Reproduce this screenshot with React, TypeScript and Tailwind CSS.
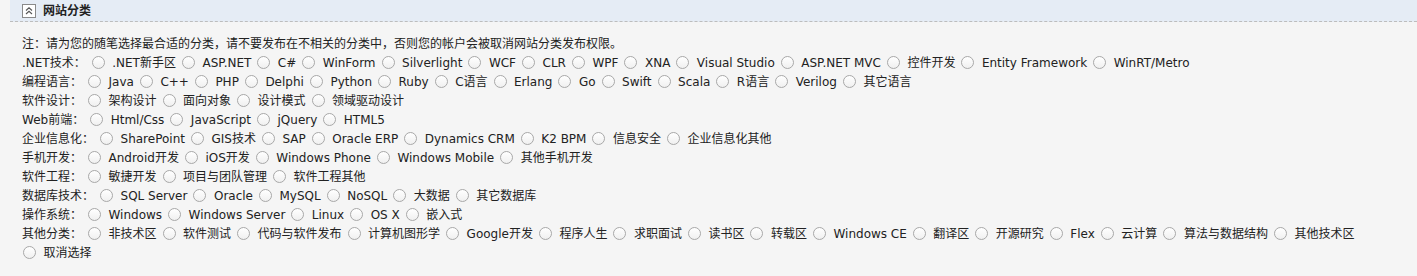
const groups: { label: string; items: string[] }[] = [
  {
    label: ".NET技术：",
    items: [".NET新手区", "ASP.NET", "C#", "WinForm", "Silverlight", "WCF", "CLR", "WPF", "XNA", "Visual Studio", "ASP.NET MVC", "控件开发", "Entity Framework", "WinRT/Metro"],
  },
  {
    label: "编程语言：",
    items: ["Java", "C++", "PHP", "Delphi", "Python", "Ruby", "C语言", "Erlang", "Go", "Swift", "Scala", "R语言", "Verilog", "其它语言"],
  },
  { label: "软件设计：", items: ["架构设计", "面向对象", "设计模式", "领域驱动设计"] },
  { label: "Web前端：", items: ["Html/Css", "JavaScript", "jQuery", "HTML5"] },
  {
    label: "企业信息化：",
    items: ["SharePoint", "GIS技术", "SAP", "Oracle ERP", "Dynamics CRM", "K2 BPM", "信息安全", "企业信息化其他"],
  },
  { label: "手机开发：", items: ["Android开发", "iOS开发", "Windows Phone", "Windows Mobile", "其他手机开发"] },
  { label: "软件工程：", items: ["敏捷开发", "项目与团队管理", "软件工程其他"] },
  { label: "数据库技术：", items: ["SQL Server", "Oracle", "MySQL", "NoSQL", "大数据", "其它数据库"] },
  { label: "操作系统：", items: ["Windows", "Windows Server", "Linux", "OS X", "嵌入式"] },
  {
    label: "其他分类：",
    items: ["非技术区", "软件测试", "代码与软件发布", "计算机图形学", "Google开发", "程序人生", "求职面试", "读书区", "转载区", "Windows CE", "翻译区", "开源研究", "Flex", "云计算", "算法与数据结构", "其他技术区"],
  },
];

function Radio() {
  return (
    <span className="inline-block h-[13px] w-[13px] shrink-0 rounded-full border border-[#a8a8a8] bg-gradient-to-b from-white to-[#f0f0f0]" />
  );
}

function Option({ text }: { text: string }) {
  return (
    <span className="flex items-center">
      <Radio />
      <span className="ml-[7.5px] mr-[6px] whitespace-nowrap">{text}</span>
    </span>
  );
}

export default function App() {
  return (
    <main
      className="h-[276px] w-[1417px] overflow-hidden bg-[#f5f5f5] text-[12px] text-[#222]"
      style={{ fontFamily: '"DejaVu Sans", "Noto Sans CJK SC", sans-serif' }}
    >
      <div className="ml-[10px] flex h-[22px] items-center border-b border-dashed border-[#bdbdbd] bg-[#e5ecf5] pl-[12px]">
        <span className="flex h-[14px] w-[14px] items-center justify-center border border-[#8a8a8a] bg-white">
          <svg width="10" height="10" viewBox="0 0 10 10" fill="none" stroke="#555" strokeWidth="1.1">
            <path d="M2 4.5 L5 1.8 L8 4.5" />
            <path d="M2 8 L5 5.3 L8 8" />
          </svg>
        </span>
        <span className="ml-[7px] font-bold text-[#222]">网站分类</span>
      </div>

      <div className="pl-[22px] pt-[12px]">
        <div className="flex h-[19px] items-center">
          注：请为您的随笔选择最合适的分类，请不要发布在不相关的分类中，否则您的帐户会被取消网站分类发布权限。
        </div>
        {groups.map((g) => (
          <div key={g.label} className="flex h-[19px] items-center">
            <span className="mr-[6px] whitespace-nowrap">{g.label}</span>
            {g.items.map((it) => (
              <Option key={it} text={it} />
            ))}
          </div>
        ))}
        <div className="flex h-[19px] items-center pl-[1px]">
          <Option text="取消选择" />
        </div>
      </div>
    </main>
  );
}
